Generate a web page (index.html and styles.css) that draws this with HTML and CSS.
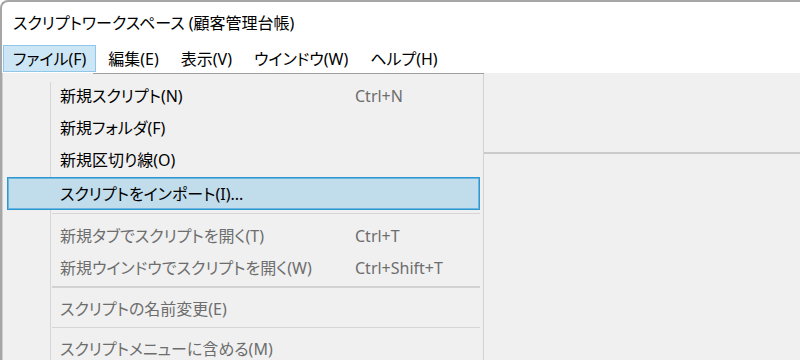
FILE: index.html
```html
<!DOCTYPE html>
<html lang="ja">
<head>
<meta charset="utf-8">
<link rel="stylesheet" href="styles.css">
</head>
<body>
<div class="window">
  <div class="titlebar"><span class="title">スクリプトワークスペース (顧客管理台帳)</span></div>
  <div class="menubar">
    <span class="mb-item active">ファイル(F)</span>
    <span class="mb-item">編集(E)</span>
    <span class="mb-item">表示(V)</span>
    <span class="mb-item">ウインドウ(W)</span>
    <span class="mb-item">ヘルプ(H)</span>
  </div>
  <div class="content">
    <div class="toolbar"></div>
    <div class="dropdown">
      <div class="icon-col"></div>
      <div class="item"><span class="label">新規スクリプト(N)</span><span class="key">Ctrl+N</span></div>
      <div class="item"><span class="label">新規フォルダ(F)</span><span class="key"></span></div>
      <div class="item"><span class="label">新規区切り線(O)</span><span class="key"></span></div>
      <div class="item hot"><span class="label">スクリプトをインポート(I)...</span><span class="key"></span></div>
      <div class="sep sep-a"></div>
      <div class="item disabled"><span class="label">新規タブでスクリプトを開く(T)</span><span class="key">Ctrl+T</span></div>
      <div class="item disabled"><span class="label">新規ウインドウでスクリプトを開く(W)</span><span class="key">Ctrl+Shift+T</span></div>
      <div class="sep sep-b"></div>
      <div class="item disabled"><span class="label">スクリプトの名前変更(E)</span><span class="key"></span></div>
      <div class="sep sep-c"></div>
      <div class="item disabled"><span class="label">スクリプトメニューに含める(M)</span><span class="key"></span></div>
    </div>
  </div>
</div>
</body>
</html>
```

FILE: styles.css
```css
html, body {
  margin: 0;
  padding: 0;
  background: #ffffff;
}

body {
  font-family: "Noto Sans", "Noto Sans CJK JP", sans-serif;
  font-feature-settings: "palt";
  font-size: 16px;
  color: #000000;
  width: 800px;
  height: 360px;
  overflow: hidden;
}

.window {
  box-sizing: border-box;
  width: 808px;
  height: 360px;
  border-top: 2px solid #a6a6a6;
  border-left: 2px solid #a6a6a6;
  border-top-left-radius: 8px;
  background: #ffffff;
  display: flex;
  flex-direction: column;
  overflow: hidden;
}

.titlebar {
  height: 43px;
  display: flex;
  align-items: center;
  padding-left: 11px;
  padding-bottom: 2px;
  box-sizing: border-box;
}

.title {
  line-height: 20px;
  white-space: nowrap;
}

.menubar {
  height: 28px;
  display: flex;
  align-items: flex-start;
  padding-left: 1px;
  gap: 2px;
}

.mb-item {
  height: 27px;
  box-sizing: border-box;
  border: 1px solid transparent;
  padding: 0 9px;
  line-height: 26px;
  white-space: nowrap;
}

.mb-item.active {
  background: #cce6f6;
  border-color: #8fc7ea;
}

.content {
  flex: 1;
  background: #f0f0f0;
  position: relative;
}

.toolbar {
  height: 81px;
  box-sizing: border-box;
  border-bottom: 2px solid #cbcbcb;
}

.dropdown {
  position: absolute;
  left: 0;
  top: 0;
  width: 482px;
  height: 300px;
  box-sizing: border-box;
  background: #f0f0f0;
  border-left: 1px solid #cfcfcf;
  border-right: 1px solid #d2d2d2;
  padding-top: 7px;
}

.dropdown::before {
  content: "";
  position: absolute;
  left: 90px;
  right: -1px;
  top: 0;
  height: 1px;
  background: #9e9e9e;
}

.icon-col {
  position: absolute;
  left: 47px;
  top: 9px;
  bottom: 0;
  width: 1px;
  background: #d6d6d6;
}

.item {
  position: relative;
  height: 32px;
  display: flex;
  align-items: center;
  padding-left: 57px;
  box-sizing: border-box;
  white-space: nowrap;
  line-height: 20px;
}

.label {
  width: 295px;
  flex: none;
}

.key {
  color: #6d6d6d;
}

.item.disabled .label {
  color: #6d6d6d;
}

.item.hot {
  margin: 1px 3px 0 4px;
  height: 33px;
  padding-left: 52px;
  background: #c1dceb;
  border: 1px solid #2f96d0;
  box-shadow: inset 0 0 0 1px #6ab6e0;
}

.sep {
  position: relative;
}

.sep::after {
  content: "";
  position: absolute;
  left: 49px;
  right: 3px;
  height: 1px;
  background: #d6d6d6;
}

.sep-a {
  height: 10px;
}

.sep-a::after {
  top: 3px;
}

.sep-b {
  height: 9px;
}

.sep-b::after {
  top: 2px;
  height: 2px;
  background: #d2d2d2;
}

.sep-c {
  height: 8px;
}

.sep-c::after {
  top: 2px;
}
```
